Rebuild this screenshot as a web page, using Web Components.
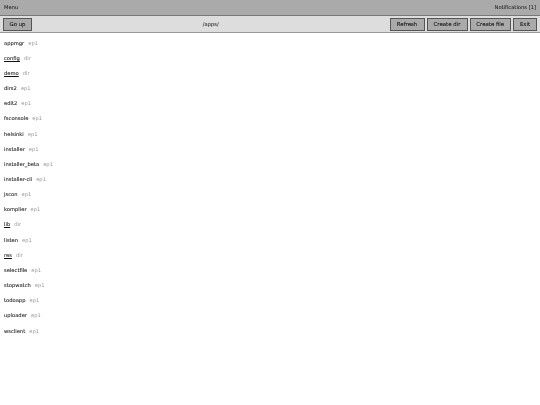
<!DOCTYPE html>
<html>
<head>
<meta charset="utf-8">
<style>
html, body { margin: 0; padding: 0; background: #fff; }
body { font-family: "DejaVu Sans", sans-serif; font-size: 5.2px; color: #222; text-rendering: geometricPrecision; min-height: 405px; filter: blur(0.25px); }
</style>
</head>
<body>
<top-bar><span slot="left">Menu</span><span slot="right">Notifications [1]</span></top-bar>
<tool-bar path="/apps/">
  <tool-button slot="left" w="29">Go up</tool-button>
  <tool-button slot="right" w="35">Refresh</tool-button>
  <tool-button slot="right" w="41">Create dir</tool-button>
  <tool-button slot="right" w="41.5">Create file</tool-button>
  <tool-button slot="right" w="24">Exit</tool-button>
</tool-bar>
<file-list>
  <file-row name="appmgr" kind="ep1"></file-row>
  <file-row name="config" kind="dir"></file-row>
  <file-row name="demo" kind="dir"></file-row>
  <file-row name="dirs2" kind="ep1"></file-row>
  <file-row name="edit2" kind="ep1"></file-row>
  <file-row name="fsconsole" kind="ep1"></file-row>
  <file-row name="helsinki" kind="ep1"></file-row>
  <file-row name="installer" kind="ep1"></file-row>
  <file-row name="installer_beta" kind="ep1"></file-row>
  <file-row name="installer-cli" kind="ep1"></file-row>
  <file-row name="jscon" kind="ep1"></file-row>
  <file-row name="komplier" kind="ep1"></file-row>
  <file-row name="lib" kind="dir"></file-row>
  <file-row name="listen" kind="ep1"></file-row>
  <file-row name="res" kind="dir"></file-row>
  <file-row name="selectfile" kind="ep1"></file-row>
  <file-row name="stopwatch" kind="ep1"></file-row>
  <file-row name="todoapp" kind="ep1"></file-row>
  <file-row name="uploader" kind="ep1"></file-row>
  <file-row name="wsclient" kind="ep1"></file-row>
</file-list>
<script>
class TopBar extends HTMLElement {
    connectedCallback() {
        this.attachShadow({mode: 'open'})
        this.shadowRoot.innerHTML = `
        <style>
            :host {
                display: flex;
                justify-content: space-between;
                align-items: center;
                box-sizing: border-box;
                height: 16px;
                padding: 1px 4px 0;
                background: #aaa;
                border-bottom: 1px solid #777;
                color: #222;
                -webkit-text-stroke: 0.05px #222;
            }
        </style>
        <slot name="left"></slot>
        <slot name="right"></slot>
        `
    }
}

class ToolBar extends HTMLElement {
    connectedCallback() {
        this.attachShadow({mode: 'open'})
        this.shadowRoot.innerHTML = `
        <style>
            :host {
                display: flex;
                justify-content: space-between;
                align-items: center;
                height: 16px;
                padding: 0 3px;
                background: #ddd;
                border-bottom: 1px solid #999;
            }
            .side { display: flex; gap: 2px; }
            .path { color: #222; padding-top: 1px; -webkit-text-stroke: 0.05px #222; }
        </style>
        <div class="side"><slot name="left"></slot></div>
        <div class="path">${this.getAttribute('path')}</div>
        <div class="side"><slot name="right"></slot></div>
        `
    }
}

class ToolButton extends HTMLElement {
    connectedCallback() {
        const w = this.getAttribute('w') || 30
        this.attachShadow({mode: 'open'})
        this.shadowRoot.innerHTML = `
        <style>
            :host {
                display: flex;
                align-items: center;
                justify-content: center;
                box-sizing: border-box;
                width: ${w}px;
                height: 13px;
                padding-top: 1px;
                background: #aaa;
                border: 1px solid #555;
                color: #111;
                font-size: 5.4px;
                -webkit-text-stroke: 0.07px #111;
            }
        </style>
        <slot></slot>
        `
    }
}

class FileList extends HTMLElement {
    connectedCallback() {
        this.attachShadow({mode: 'open'})
        this.shadowRoot.innerHTML = `
        <style>
            :host {
                display: block;
                padding: 3px 4px 0;
            }
        </style>
        <slot></slot>
        `
    }
}

class FileRow extends HTMLElement {
    connectedCallback() {
        const kind = this.getAttribute('kind')
        this.attachShadow({mode: 'open'})
        this.shadowRoot.innerHTML = `
        <style>
            :host {
                display: flex;
                align-items: center;
                gap: 4px;
                height: 15.16px;
            }
            .name { color: #111; -webkit-text-stroke: 0.06px #111; }
            .dir { text-decoration: underline; text-decoration-thickness: 0.5px; }
            .kind { color: #999; }
        </style>
        <span class="name ${kind == 'dir' ? 'dir' : ''}">${this.getAttribute('name')}</span>
        <span class="kind">${kind}</span>
        `
    }
}

window.customElements.define('top-bar', TopBar)
window.customElements.define('tool-bar', ToolBar)
window.customElements.define('tool-button', ToolButton)
window.customElements.define('file-list', FileList)
window.customElements.define('file-row', FileRow)
</script>
</body>
</html>
